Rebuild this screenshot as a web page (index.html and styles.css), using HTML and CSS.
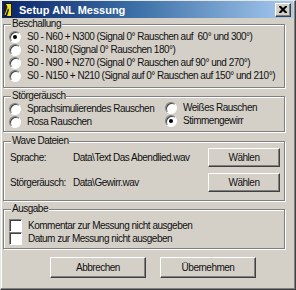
FILE: index.html
```html
<!DOCTYPE html>
<html>

<head>
    <title>Setup ANL Messung</title>
    <link rel="stylesheet" href="styles.css">
</head>

<body>
    <div class="window">
        <div class="title-bar">
            <svg class="app-icon" width="8" height="14" viewBox="0 0 8 14">
                <rect x="0" y="0" width="8" height="14" fill="#1a1a1a" />
                <polygon points="2,1 7,1 7,13 3,13 5,7" fill="#f2e21a" />
                <line x1="1" y1="12" x2="4" y2="4" stroke="#f2e21a" stroke-width="1" />
            </svg>
            <span class="title">Setup ANL Messung</span>
            <div class="close-btn">
                <svg width="8" height="7" viewBox="0 0 8 7">
                    <path d="M0 0h2l2 2 2-2h2v1l-2.5 2.5 2.5 2.5v1h-2l-2-2-2 2h-2v-1l2.5-2.5-2.5-2.5z" fill="#000" />
                </svg>
            </div>
        </div>

        <div class="content">
            <fieldset class="group group-beschallung">
                <legend>Beschallung</legend>
                <div class="option"><span class="radio checked"></span>S0 - N60 + N300 (Signal 0° Rauschen auf &nbsp;60° und 300°)</div>
                <div class="option"><span class="radio"></span>S0 - N180 (Signal 0° Rauschen 180°)</div>
                <div class="option"><span class="radio"></span>S0 - N90 + N270 (Signal 0° Rauschen auf 90° und 270°)</div>
                <div class="option"><span class="radio"></span>S0 - N150 + N210 (Signal auf 0° Rauschen auf 150° und 210°)</div>
            </fieldset>

            <fieldset class="group group-stoer">
                <legend>Störgeräusch</legend>
                <div class="two-cols">
                    <div class="col">
                        <div class="option"><span class="radio"></span>Sprachsimulierendes Rauschen</div>
                        <div class="option"><span class="radio"></span>Rosa Rauschen</div>
                    </div>
                    <div class="col col-right">
                        <div class="option"><span class="radio"></span>Weißes Rauschen</div>
                        <div class="option"><span class="radio checked"></span>Stimmengewirr</div>
                    </div>
                </div>
            </fieldset>

            <fieldset class="group group-wave">
                <legend>Wave Dateien</legend>
                <div class="file-row">
                    <span class="file-label">Sprache:</span>
                    <span class="file-name">Data\Text Das Abendlied.wav</span>
                    <button class="btn btn-choose">Wählen</button>
                </div>
                <div class="file-row">
                    <span class="file-label">Störgeräusch:</span>
                    <span class="file-name">Data\Gewirr.wav</span>
                    <button class="btn btn-choose">Wählen</button>
                </div>
            </fieldset>

            <fieldset class="group group-ausgabe">
                <legend>Ausgabe</legend>
                <div class="option"><span class="checkbox"></span>Kommentar zur Messung nicht ausgeben</div>
                <div class="option"><span class="checkbox"></span>Datum zur Messung nicht ausgeben</div>
            </fieldset>

            <div class="dialog-buttons">
                <button class="btn btn-main">Abbrechen</button>
                <button class="btn btn-main">Übernehmen</button>
            </div>
        </div>
    </div>
</body>

</html>
```

FILE: styles.css
```css
body {
    margin: 0;
    padding: 0;
    background-color: #d4d0c8;
    font-family: "Liberation Sans", Arial, sans-serif;
    font-size: 10px;
    letter-spacing: -0.5px;
    color: #111;
}

.window {
    width: 296px;
    height: 290px;
    box-sizing: border-box;
    background-color: #d4d0c8;
    border: 1px solid;
    border-color: #e8e6e0 #404040 #404040 #e8e6e0;
    box-shadow: inset -1px -1px #808080, inset 1px 1px #ffffff;
    padding: 0 2px 2px 1px;
}

.title-bar {
    height: 17px;
    display: flex;
    align-items: center;
    background: linear-gradient(to right, #0a246a, #3a6ea5 45%, #a6caf0);
    padding: 0 2px 0 2px;
}

.app-icon {
    margin-right: 7px;
}

.title {
    color: #ffffff;
    font-weight: bold;
    font-size: 11px;
    letter-spacing: 0;
    flex: 1;
}

.close-btn {
    width: 14px;
    height: 12px;
    background-color: #d4d0c8;
    border: 1px solid;
    border-color: #ffffff #404040 #404040 #ffffff;
    box-shadow: inset -1px -1px #808080;
    display: flex;
    align-items: center;
    justify-content: center;
}

.content {
    padding: 0 8px 0 1px;
}

.group {
    margin: 0;
    min-width: 0;
    padding: 0 4px 0 5px;
    border: 1px solid #808080;
    box-shadow: inset 1px 1px #ffffff, 1px 1px #ffffff;
}

.group legend {
    padding: 0 1px;
    margin-left: 2px;
    line-height: 12px;
    background-color: #d4d0c8;
}

.group-beschallung {
    padding-bottom: 5px;
}

.group-stoer {
    margin-top: 2px;
    padding-bottom: 3px;
}

.group-wave {
    margin-top: 3px;
    padding-top: 1px;
    padding-bottom: 8px;
}

.group-ausgabe {
    margin-top: 2px;
    padding-top: 4px;
    padding-bottom: 3px;
}

.option {
    display: flex;
    align-items: center;
    height: 13px;
    white-space: nowrap;
}

.radio {
    position: relative;
    width: 10px;
    height: 10px;
    margin-right: 6px;
    border-radius: 50%;
    background-color: #ffffff;
    border: 1px solid;
    border-color: #808080 #ffffff #ffffff #808080;
    box-shadow: inset 1px 1px #404040;
    flex: none;
}

.radio.checked::after {
    content: "";
    position: absolute;
    left: 3px;
    top: 3px;
    width: 4px;
    height: 4px;
    border-radius: 50%;
    background-color: #000;
}

.checkbox {
    width: 11px;
    height: 11px;
    margin-right: 6px;
    background-color: #ffffff;
    border: 1px solid;
    border-color: #808080 #ffffff #ffffff #808080;
    box-shadow: inset 1px 1px #404040;
    flex: none;
}

.two-cols {
    display: flex;
}

.col {
    width: 156px;
}

.col-right {
    width: auto;
    flex: 1;
    margin-top: -1px;
}

.file-row {
    display: flex;
    align-items: center;
    height: 19px;
    padding-left: 1px;
}

.file-row + .file-row {
    margin-top: 6px;
}

.file-label {
    width: 63px;
}

.file-name {
    flex: 1;
}

.btn {
    font-family: "Liberation Sans", Arial, sans-serif;
    font-size: 10px;
    letter-spacing: -0.5px;
    color: #111;
    background-color: #d4d0c8;
    border: 1px solid;
    border-color: #ffffff #404040 #404040 #ffffff;
    box-shadow: inset -1px -1px #808080;
    padding: 0;
}

.btn-choose {
    width: 72px;
    height: 19px;
    margin-right: 0;
}

.dialog-buttons {
    display: flex;
    gap: 14px;
    padding-left: 47px;
    margin-top: 8px;
}

.btn-main {
    width: 96px;
    height: 21px;
}
```
